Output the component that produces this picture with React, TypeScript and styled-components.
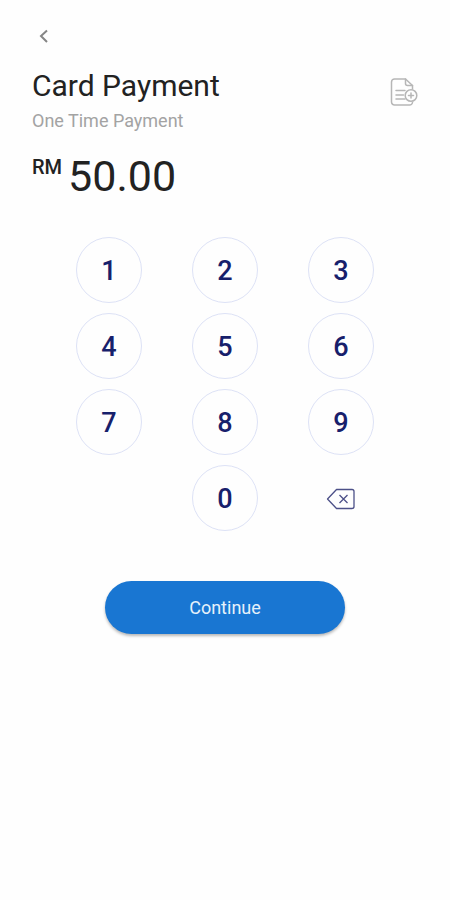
import React, { useState } from "react";
import styled, { createGlobalStyle } from "styled-components";

const GlobalStyle = createGlobalStyle`
  *, *::before, *::after { box-sizing: border-box; }
  body {
    margin: 0;
    background: #fefefe;
    font-family: Roboto, "Liberation Sans", sans-serif;
  }
  button { font: inherit; border: 0; padding: 0; background: none; cursor: pointer; }
  svg { display: block; }
`;

const Screen = styled.main`
  display: flex;
  flex-direction: column;
  min-height: 100vh;
  padding: 24px 32px;
`;

const BackButton = styled.button`
  display: grid;
  place-items: center;
  width: 24px;
  height: 24px;
  color: #858585;
`;

const Header = styled.header`
  display: flex;
  align-items: flex-start;
  justify-content: space-between;
  margin-top: 20px;
`;

const Title = styled.h1`
  margin: 0;
  font-size: 30px;
  line-height: 36px;
  font-weight: 400;
  color: #222;
`;

const Subtitle = styled.p`
  margin: 5px 0 0;
  font-size: 18px;
  line-height: 24px;
  color: #a3a3a3;
`;

const NoteButton = styled.button`
  margin-top: 9px;
  color: #b6b6b6;
`;

const Amount = styled.p`
  display: flex;
  align-items: flex-start;
  gap: 6px;
  margin: 15px 0 0;
  color: #222;
`;

const Currency = styled.span`
  padding-top: 7px;
  font-size: 20px;
  line-height: 24px;
  font-weight: 500;
`;

const Value = styled.span`
  font-size: 43px;
  line-height: 56px;
`;

const Keypad = styled.div`
  display: grid;
  grid-template-columns: repeat(3, 66px);
  grid-auto-rows: 66px;
  justify-content: center;
  gap: 10px 50px;
  margin-top: 33px;
`;

const Key = styled.button<{ $column?: number; $plain?: boolean }>`
  display: grid;
  place-items: center;
  grid-column: ${({ $column }) => $column ?? "auto"};
  padding-top: 2px;
  border: 1px solid ${({ $plain }) => ($plain ? "transparent" : "#dde2f6")};
  border-radius: 50%;
  font-size: 27px;
  line-height: 32px;
  font-weight: 500;
  color: #17206b;
`;

const ContinueButton = styled.button`
  align-self: center;
  width: 62%;
  min-height: 53px;
  margin-top: 50px;
  border-radius: 27px;
  background: #1976d2;
  box-shadow: 0 2px 3px rgba(0, 0, 0, 0.28);
  font-size: 18px;
  line-height: 24px;
  color: #e6f1fb;
`;

const BackIcon = () => (
  <svg width="24" height="24" viewBox="0 0 24 24" fill="none" stroke="currentColor" strokeWidth="2" aria-hidden="true">
    <path d="M15 6.5 9 12l6 6" />
  </svg>
);

const NoteIcon = () => (
  <svg width="28" height="30" viewBox="0 0 28 30" fill="none" stroke="currentColor" strokeWidth="1.5" strokeLinecap="round" strokeLinejoin="round" aria-hidden="true">
    <path d="M22.5 12V8.5L15.5 2H4.5A3 3 0 0 0 1.5 5v20a3 3 0 0 0 3 3h15a3 3 0 0 0 3-2.5" />
    <path d="M15.5 2v4.500a2 2 0 0 0 2 2h5M6 13.500h9M6 18h7.500M6 22h9" />
    <circle cx="21" cy="18.5" r="5.8" />
    <path d="M18.5 18.500h5M21 16v5" />
  </svg>
);

const BackspaceIcon = () => (
  <svg width="30" height="22" viewBox="0 0 30 22" fill="none" stroke="#4c5088" strokeWidth="1.3" strokeLinejoin="round" aria-hidden="true">
    <path d="M10.500 1.500H26a2 2 0 0 1 2 2v15a2 2 0 0 1-2 2H10.500L1.500 11z" />
    <path d="m13.500 7 8 8M21.500 7l-8 8" />
  </svg>
);

const digits = ["1", "2", "3", "4", "5", "6", "7", "8", "9", "0"];

export default function App() {
  const [cents, setCents] = useState(5000);
  const press = (digit: string) =>
    setCents((value) => (value < 1000000 ? value * 10 + Number(digit) : value));

  return (
    <>
      <GlobalStyle />
      <Screen>
        <BackButton type="button" aria-label="Back">
          <BackIcon />
        </BackButton>
        <Header>
          <div>
            <Title>Card Payment</Title>
            <Subtitle>One Time Payment</Subtitle>
          </div>
          <NoteButton type="button" aria-label="Add note">
            <NoteIcon />
          </NoteButton>
        </Header>
        <Amount>
          <Currency>RM</Currency>
          <Value>{(cents / 100).toFixed(2)}</Value>
        </Amount>
        <Keypad>
          {digits.map((digit) => (
            <Key key={digit} type="button" $column={digit === "0" ? 2 : undefined} onClick={() => press(digit)}>
              {digit}
            </Key>
          ))}
          <Key
            type="button"
            $plain
            aria-label="Delete last digit"
            onClick={() => setCents((value) => Math.floor(value / 10))}
          >
            <BackspaceIcon />
          </Key>
        </Keypad>
        <ContinueButton type="button">Continue</ContinueButton>
      </Screen>
    </>
  );
}
